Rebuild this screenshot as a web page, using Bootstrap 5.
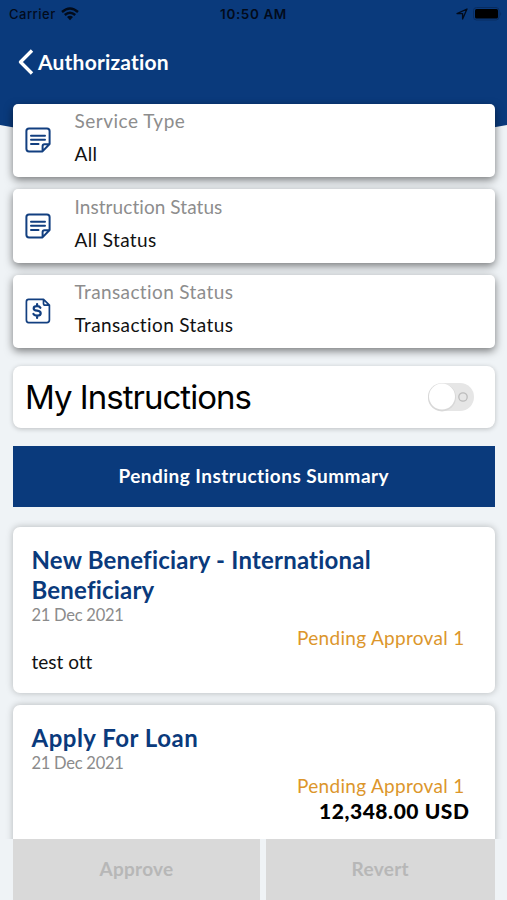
<!DOCTYPE html>
<html lang="en">
<head>
<meta charset="utf-8">
<meta name="viewport" content="width=device-width, initial-scale=1">
<title>Authorization</title>
<link rel="stylesheet" href="https://cdn.jsdelivr.net/npm/bootstrap@5.3.0/dist/css/bootstrap.min.css">
<style>
  body { background: #eff3f6; font-family: Lato, "Open Sans", sans-serif; font-variant-ligatures: none; color: #111; }
  .screen { height: 900px; isolation: isolate; }
  .hero-shape { z-index: -1; top: 0; left: 0; width: 100%; height: 150px; }
  .status-bar { height: 28px; padding: 0 9px; font: 500 13px/28px Inter, sans-serif; color: #020b1b; }
  .status-carrier { letter-spacing: .5px; }
  .status-time { font-size: 13.5px; font-weight: 600; letter-spacing: .6px; white-space: nowrap; }
  .status-battery { margin: 0 -4px 0 5px; }
  .title-bar { height: 75.5px; padding: 0 0 7px 17px; }
  .title-text { font-size: 21px; font-weight: 700; line-height: 30px; letter-spacing: .2px; }
  .page-body { padding: 0 12.5px 0 13px; }
  .filter-card { height: 73.5px; margin-bottom: 12px; padding-left: 12px; border-radius: 5px; box-shadow: 0 3px 8px rgba(0,0,0,.5); }
  .filter-icon { width: 26px; margin-right: 23.5px; }
  .filter-text { padding-bottom: 6px; font-size: 19px; line-height: 33px; letter-spacing: .38px; }
  .filter-label { color: #8d8d8d; }
  .label-wide { letter-spacing: .5px; }
  .label-tight { letter-spacing: .07px; }
  .toggle-card { height: 61.5px; margin-top: 18px; padding: 0 20px 0 12px; border-radius: 8px; box-shadow: 0 1px 5px rgba(0,0,0,.22); }
  .toggle-title { font: 400 33px/60px Inter, sans-serif; letter-spacing: -.98px; color: #000; }
  .banner { height: 61px; margin-top: 18px; background: #0a3a7c; font-size: 19px; font-weight: 700; letter-spacing: .46px; }
  .item-card { height: 166px; margin-bottom: 12px; padding: 18px 26px 0 18.5px; border-radius: 7px; box-shadow: 0 0 7px rgba(0,0,0,.25); }
  .item-list { margin: 13px -12.5px 0 -13px; height: 319.5px; overflow: hidden; padding: 7px 12.5px 0 13px; }
  .item-title { font-size: 24px; line-height: 30px; font-weight: 700; letter-spacing: .2px; color: #0a3a7c; }
  .title-wide { letter-spacing: .5px; }
  .item-date { font-size: 16.5px; line-height: 21px; letter-spacing: -.25px; color: #8b8b8b; }
  .item-state { font-size: 19px; line-height: 23px; color: #dc962b; padding-right: 4px; letter-spacing: .3px; }
  .item-note { font-size: 19px; line-height: 25px; }
  .item-amount { font-size: 21px; line-height: 28px; font-weight: 900; letter-spacing: .55px; margin-right: -1px; color: #000; }
  .action { height: 61px; background: #d9d9d9; color: #b7b7b7; font-size: 19px; font-weight: 700; letter-spacing: .3px; }
  .action-approve { width: 247px; margin-right: 6px; }
</style>
<script src="https://cdn.jsdelivr.net/npm/bootstrap@5.3.0/dist/js/bootstrap.bundle.min.js"></script>
</head>
<body>
<div class="screen position-relative overflow-hidden">
  <svg class="hero-shape position-absolute" viewBox="0 0 507 150" preserveAspectRatio="none" aria-hidden="true"><path d="M0 0H507V125Q253 173 0 125Z" fill="#0a3a7c"/></svg>

  <div class="status-bar d-flex justify-content-between position-relative">
    <div class="d-flex align-items-center"><span class="status-carrier">Carrier</span>
      <svg class="ms-1" width="20" height="14" viewBox="0 0 18 14" fill="none" stroke="currentColor" stroke-width="2.4"><path d="M1 5Q9-2 17 5M3.8 8Q9 3.3 14.2 8"/><path d="M9 13.3L6 10Q9 7.6 12 10Z" fill="currentColor" stroke="none"/></svg>
    </div>
    <span class="status-time position-absolute start-50 translate-middle-x">10:50 AM</span>
    <div class="d-flex align-items-center">
      <svg width="12" height="12" viewBox="0 0 12 12" fill="none" stroke="currentColor" stroke-width="1.3" stroke-linejoin="round"><path d="M1 5.6L11 1L6.6 11V5.6Z"/></svg>
      <svg class="status-battery" width="29" height="14" viewBox="0 0 29 14"><rect x=".5" y=".5" width="25.5" height="12.5" rx="3" fill="none" stroke="#082c60"/><rect x="2" y="2" width="23" height="9.5" rx="1.5" fill="#000"/><path d="M27.3 4.5v4.5q1.7-2.2 0-4.5" fill="#082c60"/></svg>
    </div>
  </div>

  <header class="title-bar d-flex align-items-center text-white">
    <svg width="17" height="26" viewBox="0 0 17 26" fill="none" stroke="#fff" stroke-width="3.4" stroke-linejoin="round"><path d="M15 1.5L3.5 13L15 24.5"/></svg>
    <h1 class="title-text mb-0 ms-1">Authorization</h1>
  </header>

  <main class="page-body">
    <section class="filter-card bg-white d-flex align-items-center">
      <svg class="filter-icon" height="26" viewBox="0 0 26 26" fill="none" stroke="#123f80" stroke-width="2" stroke-linejoin="round" stroke-linecap="round"><path d="M4 1.4H22Q24.6 1.4 24.6 4V17L17.5 24.4H4Q1.4 24.4 1.4 21.8V4Q1.4 1.4 4 1.4ZM24.2 17.2H19.5Q17.6 17.2 17.6 19.2V24M6 8.7H20M6 12.8H20M6 16.9H13.5"/></svg>
      <div class="filter-text"><div class="filter-label label-wide">Service Type</div><div>All</div></div>
    </section>
    <section class="filter-card bg-white d-flex align-items-center">
      <svg class="filter-icon" height="26" viewBox="0 0 26 26" fill="none" stroke="#123f80" stroke-width="2" stroke-linejoin="round" stroke-linecap="round"><path d="M4 1.4H22Q24.6 1.4 24.6 4V17L17.5 24.4H4Q1.4 24.4 1.4 21.8V4Q1.4 1.4 4 1.4ZM24.2 17.2H19.5Q17.6 17.2 17.6 19.2V24M6 8.7H20M6 12.8H20M6 16.9H13.5"/></svg>
      <div class="filter-text"><div class="filter-label label-tight">Instruction Status</div><div>All Status</div></div>
    </section>
    <section class="filter-card bg-white d-flex align-items-center mb-0">
      <svg class="filter-icon" height="26" viewBox="0 0 26 26" fill="none" stroke="#123f80" stroke-width="1.7" stroke-linejoin="round" stroke-linecap="round"><path d="M3.6 1.4H18.5L24.4 7.2V22Q24.4 24.6 21.8 24.6H3.6Q1.4 24.6 1.4 22V3.8Q1.4 1.4 3.6 1.4ZM18.5 1.6V5.5Q18.5 7.2 20.2 7.2H24.2"/><path d="M15.4 9.8Q14.6 8.2 12.1 8.2Q8.7 8.2 8.7 10.4Q8.7 12.3 12.1 12.7Q15.7 13.2 15.7 15.3Q15.7 17.7 12.1 17.7Q9.2 17.7 8.4 15.9M12.1 6V8M12.1 17.8V20" stroke-width="2.2"/></svg>
      <div class="filter-text"><div class="filter-label">Transaction Status</div><div>Transaction Status</div></div>
    </section>

    <section class="toggle-card bg-white d-flex align-items-center justify-content-between">
      <span class="toggle-title">My Instructions</span>
      <svg width="48" height="30" viewBox="0 0 48 30"><rect x="1" y="1" width="46" height="28" rx="14" fill="#e6e6e6"/><circle cx="15" cy="15.4" r="14" fill="#d8d8d8"/><circle cx="15" cy="14.6" r="13" fill="#fff"/><circle cx="36" cy="15" r="4.2" fill="none" stroke="#bcbcbc" stroke-width="1.3"/></svg>
    </section>

    <div class="banner text-white d-flex align-items-center justify-content-center"><span>Pending Instructions Summary</span></div>

    <div class="item-list">
      <article class="item-card bg-white">
        <h2 class="item-title mb-0">New Beneficiary - International Beneficiary</h2>
        <div class="item-date">21 Dec 2021</div>
        <div class="item-state text-end">Pending Approval 1</div>
        <div class="item-note">test ott</div>
      </article>
      <article class="item-card bg-white mb-0">
        <h2 class="item-title title-wide mb-0">Apply For Loan</h2>
        <div class="item-date">21 Dec 2021</div>
        <div class="item-state text-end">Pending Approval 1</div>
        <div class="item-amount text-end">12,348.00 USD</div>
      </article>
    </div>

    <footer class="d-flex">
      <div class="action action-approve d-flex align-items-center justify-content-center">Approve</div>
      <div class="action flex-fill d-flex align-items-center justify-content-center">Revert</div>
    </footer>
  </main>
</div>
</body>
</html>
